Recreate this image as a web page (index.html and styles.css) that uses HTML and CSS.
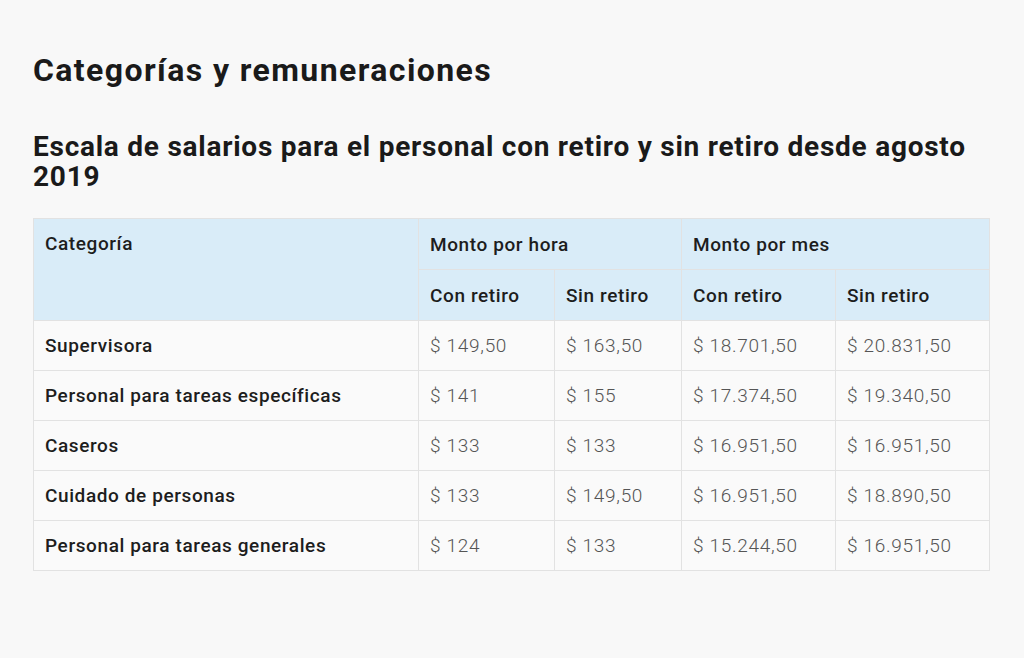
FILE: index.html
```html
<!DOCTYPE html>
<html lang="es">
<head>
<meta charset="utf-8">
<title>Categorías y remuneraciones</title>
<link rel="stylesheet" href="styles.css">
</head>
<body>
<main class="page">
  <h1 class="title">Categorías y remuneraciones</h1>
  <h2 class="subtitle">Escala de salarios para el personal con retiro y sin retiro desde agosto 2019</h2>
  <table class="salaries">
    <colgroup>
      <col class="c-cat">
      <col class="c-h1">
      <col class="c-h2">
      <col class="c-m1">
      <col class="c-m2">
    </colgroup>
    <thead>
      <tr>
        <th rowspan="2" class="th-cat">Categoría</th>
        <th colspan="2">Monto por hora</th>
        <th colspan="2">Monto por mes</th>
      </tr>
      <tr>
        <th>Con retiro</th>
        <th>Sin retiro</th>
        <th>Con retiro</th>
        <th>Sin retiro</th>
      </tr>
    </thead>
    <tbody>
      <tr><th class="row-h">Supervisora</th><td>$ 149,50</td><td>$ 163,50</td><td>$ 18.701,50</td><td>$ 20.831,50</td></tr>
      <tr><th class="row-h">Personal para tareas específicas</th><td>$ 141</td><td>$ 155</td><td>$ 17.374,50</td><td>$ 19.340,50</td></tr>
      <tr><th class="row-h">Caseros</th><td>$ 133</td><td>$ 133</td><td>$ 16.951,50</td><td>$ 16.951,50</td></tr>
      <tr><th class="row-h">Cuidado de personas</th><td>$ 133</td><td>$ 149,50</td><td>$ 16.951,50</td><td>$ 18.890,50</td></tr>
      <tr><th class="row-h">Personal para tareas generales</th><td>$ 124</td><td>$ 133</td><td>$ 15.244,50</td><td>$ 16.951,50</td></tr>
    </tbody>
  </table>
</main>
</body>
</html>
```

FILE: styles.css
```css
html, body {
  margin: 0;
  padding: 0;
  background: #f8f8f8;
}

body {
  font-family: Roboto, "Liberation Sans", Arial, sans-serif;
  color: #1b1b1b;
}

.page {
  padding: 50px 35px 40px 33px;
}

.title {
  margin: 0;
  font-size: 32px;
  line-height: 40px;
  font-weight: 700;
  letter-spacing: 1.4px;
  color: #1a1a1a;
}

.subtitle {
  margin: 42px 0 0;
  font-size: 28px;
  line-height: 30px;
  font-weight: 700;
  letter-spacing: 0.75px;
  color: #1a1a1a;
}

.salaries {
  margin-top: 26px;
  width: 956px;
  border-collapse: collapse;
  table-layout: fixed;
  border: 1px solid #e2e2e2;
}

.c-cat { width: 385px; }
.c-h1 { width: 136px; }
.c-h2 { width: 127px; }
.c-m1 { width: 154px; }
.c-m2 { width: 154px; }

.salaries th,
.salaries td {
  border: 1px solid #e2e2e2;
  padding: 12px 11px;
  height: 25px;
  line-height: 25px;
  text-align: left;
  vertical-align: middle;
  white-space: nowrap;
}

.salaries thead th {
  height: 26px;
  background: #d9ecf8;
  font-size: 19px;
  font-weight: 500;
  letter-spacing: 0.6px;
  color: #1d1d1d;
}

.salaries thead th.th-cat {
  vertical-align: top;
}

.salaries tbody th.row-h {
  background: #fafafa;
  font-size: 19px;
  font-weight: 500;
  letter-spacing: 0.6px;
  color: #1d1d1d;
}

.salaries tbody td {
  background: #fafafa;
  font-size: 19px;
  font-weight: 300;
  letter-spacing: 0.7px;
  color: #555;
}
```
